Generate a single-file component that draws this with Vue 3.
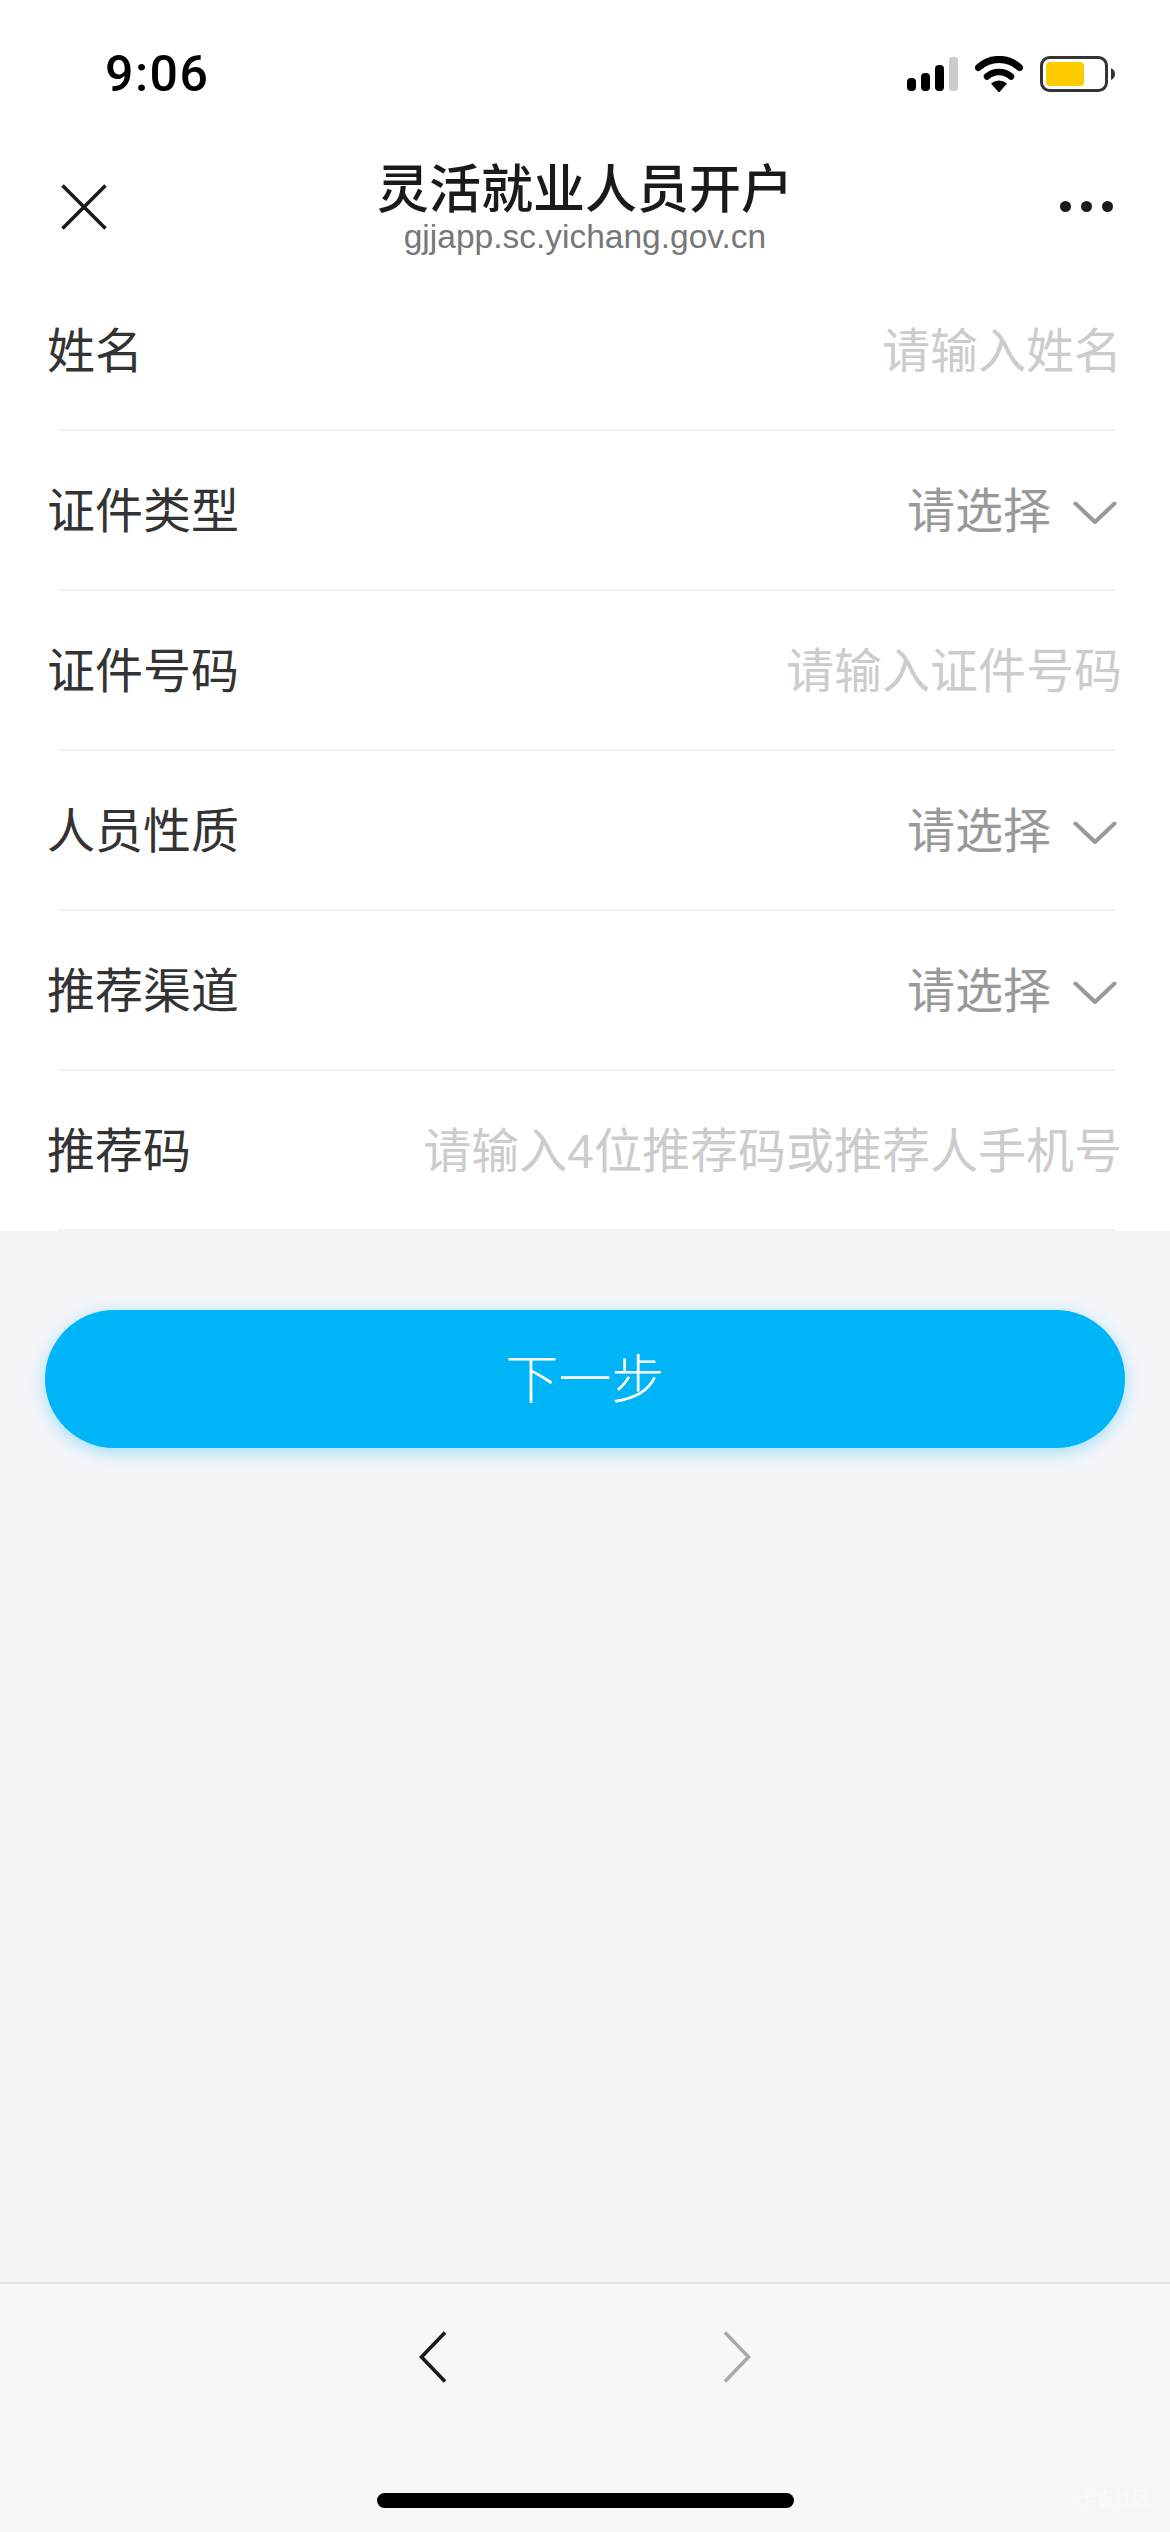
<template>
  <div class="page">
    <header class="top">
      <div class="status-bar">
        <span class="time">9:06</span>
        <div class="status-icons">
          <svg width="51" height="34" viewBox="0 0 51 34" aria-hidden="true">
            <rect x="0" y="21" width="9" height="13" rx="4" fill="#000" />
            <rect x="14" y="16" width="9" height="18" rx="4" fill="#000" />
            <rect x="28" y="8" width="9" height="26" rx="4" fill="#000" />
            <rect x="42" y="0" width="9" height="34" rx="3" fill="#ccc" />
          </svg>
          <svg width="48" height="36" viewBox="0 0 48 36" aria-hidden="true">
            <path d="M3.5 11.5 A30 30 0 0 1 44.5 11.5" fill="none" stroke="#000" stroke-width="7" stroke-linecap="round" />
            <path d="M12 20.5 A18 18 0 0 1 36 20.5" fill="none" stroke="#000" stroke-width="6.5" stroke-linecap="round" />
            <path d="M16 27.5 Q24 21.5 32 27.5 L25 35.5 Q24 36.5 23 35.5 Z" fill="#000" />
          </svg>
          <svg width="75" height="36" viewBox="0 0 75 36" aria-hidden="true">
            <rect x="1.5" y="1.5" width="65" height="33" rx="8" fill="#fff" stroke="#333" stroke-width="3" />
            <rect x="6" y="6" width="38" height="24" rx="4" fill="#fc0" />
            <path d="M71 12 Q75 14 75 18 Q75 22 71 24 Z" fill="#333" />
          </svg>
        </div>
      </div>
      <nav class="nav">
        <div class="nav-side">
          <svg class="close-icon" width="46" height="46" viewBox="0 0 46 46" aria-hidden="true">
            <path d="M1.5 1.5 L44.5 44.5 M44.5 1.5 L1.5 44.5" stroke="#1a1a1a" stroke-width="3.6" fill="none" />
          </svg>
        </div>
        <div class="nav-title">
          <div class="title">灵活就业人员开户</div>
          <div class="domain">gjjapp.sc.yichang.gov.cn</div>
        </div>
        <div class="nav-side nav-side-right">
          <span class="dot"></span><span class="dot"></span><span class="dot"></span>
        </div>
      </nav>
    </header>

    <section class="form">
      <div v-for="row in rows" :key="row.label" class="row">
        <div class="row-main">
          <span class="label">{{ row.label }}</span>
          <span v-if="row.placeholder" class="placeholder">{{ row.placeholder }}</span>
          <span v-else class="select">
            请选择
            <svg class="chevron" width="44" height="24" viewBox="0 0 44 24" aria-hidden="true">
              <path d="M2.5 2.5 L22 21 L41.5 2.5" fill="none" stroke="#999" stroke-width="4" stroke-linecap="round" stroke-linejoin="round" />
            </svg>
          </span>
        </div>
        <div class="divider"></div>
      </div>
    </section>

    <main class="content">
      <button class="next-btn" type="button">下一步</button>
    </main>

    <footer class="bottom-bar">
      <div class="bottom-nav">
        <svg width="28" height="52" viewBox="0 0 28 52" aria-hidden="true">
          <path d="M26 1.5 L2.5 26 L26 50.5" fill="none" stroke="#1a1a1a" stroke-width="3.6" />
        </svg>
        <svg width="28" height="52" viewBox="0 0 28 52" aria-hidden="true">
          <path d="M2 1.5 L25.5 26 L2 50.5" fill="none" stroke="#aaa" stroke-width="3.6" />
        </svg>
      </div>
      <div class="home-bar"></div>
      <span class="watermark">卡农社区</span>
    </footer>
  </div>
</template>

<script setup>
const rows = [
  { label: '姓名', placeholder: '请输入姓名' },
  { label: '证件类型' },
  { label: '证件号码', placeholder: '请输入证件号码' },
  { label: '人员性质' },
  { label: '推荐渠道' },
  { label: '推荐码', placeholder: '请输入4位推荐码或推荐人手机号' }
];
</script>

<style>
html,
body {
  margin: 0;
  padding: 0;
}
</style>

<style scoped>
.page {
  width: 1170px;
  height: 2532px;
  display: flex;
  flex-direction: column;
  overflow: hidden;
  background: #f3f5f9;
  font-family: "Liberation Sans", "Noto Sans CJK SC", sans-serif;
}

.top {
  height: 271px;
  background: #fff;
}

.status-bar {
  height: 130px;
  box-sizing: border-box;
  padding: 56px 55px 0 105px;
  display: flex;
  justify-content: space-between;
  align-items: flex-start;
}

.time {
  font-family: Roboto, "Liberation Sans", sans-serif;
  font-size: 50px;
  line-height: 37px;
  font-weight: 500;
  letter-spacing: 1.5px;
  color: #000;
}

.status-icons {
  display: flex;
  align-items: center;
  gap: 17px;
}

.nav {
  display: grid;
  grid-template-columns: 1fr auto 1fr;
  height: 141px;
}

.nav-side {
  display: flex;
  align-items: flex-start;
  padding: 54px 0 0 61px;
}

.nav-side-right {
  justify-content: flex-end;
  gap: 10px;
  padding: 71px 57px 0 0;
}

.dot {
  width: 11px;
  height: 11px;
  border-radius: 50%;
  background: #1a1a1a;
}

.nav-title {
  display: flex;
  flex-direction: column;
  align-items: center;
  padding-top: 33px;
}

.title {
  font-size: 52px;
  line-height: 55px;
  font-weight: 500;
  color: #1a1a1a;
}

.domain {
  font-size: 33.5px;
  line-height: 38px;
  color: #777;
}

.form {
  background: #fff;
}

.row {
  height: 160px;
  box-sizing: border-box;
}

.row-main {
  height: 158px;
  box-sizing: border-box;
  padding: 0 48px 7px 47px;
  display: flex;
  justify-content: space-between;
  align-items: center;
  font-size: 48px;
}

.divider {
  height: 2px;
  margin: 0 55px 0 58px;
  background: #f2f2f2;
}

.label {
  color: #333;
}

.placeholder {
  color: #ccc;
}

.select {
  display: flex;
  align-items: center;
  gap: 22px;
  color: #999;
}

.chevron {
  margin: 12px 5px 0 0;
}

.content {
  flex: 1;
  padding: 79px 45px 0;
}

.next-btn {
  display: block;
  width: 100%;
  height: 138px;
  border: 0;
  padding: 0 0 6px;
  border-radius: 69px;
  background: #00b5f7;
  box-shadow: 0 4px 16px rgba(0, 181, 247, 0.35);
  color: #fff;
  font-family: inherit;
  font-size: 53px;
  font-weight: 300;
}

.bottom-bar {
  position: relative;
  height: 250px;
  box-sizing: border-box;
  border-top: 2px solid #e2e2e6;
  background: #f7f7f7;
}

.bottom-nav {
  display: flex;
  justify-content: center;
  gap: 276px;
  padding-top: 47px;
  margin-left: -1px;
}

.bottom-nav svg {
  display: block;
}

.home-bar {
  width: 417px;
  height: 15px;
  margin: 110px auto 0;
  border-radius: 8px;
  background: #000;
}

.watermark {
  position: absolute;
  right: 20px;
  bottom: 22px;
  font-size: 18px;
  color: rgba(255, 255, 255, 0.6);
}
</style>
